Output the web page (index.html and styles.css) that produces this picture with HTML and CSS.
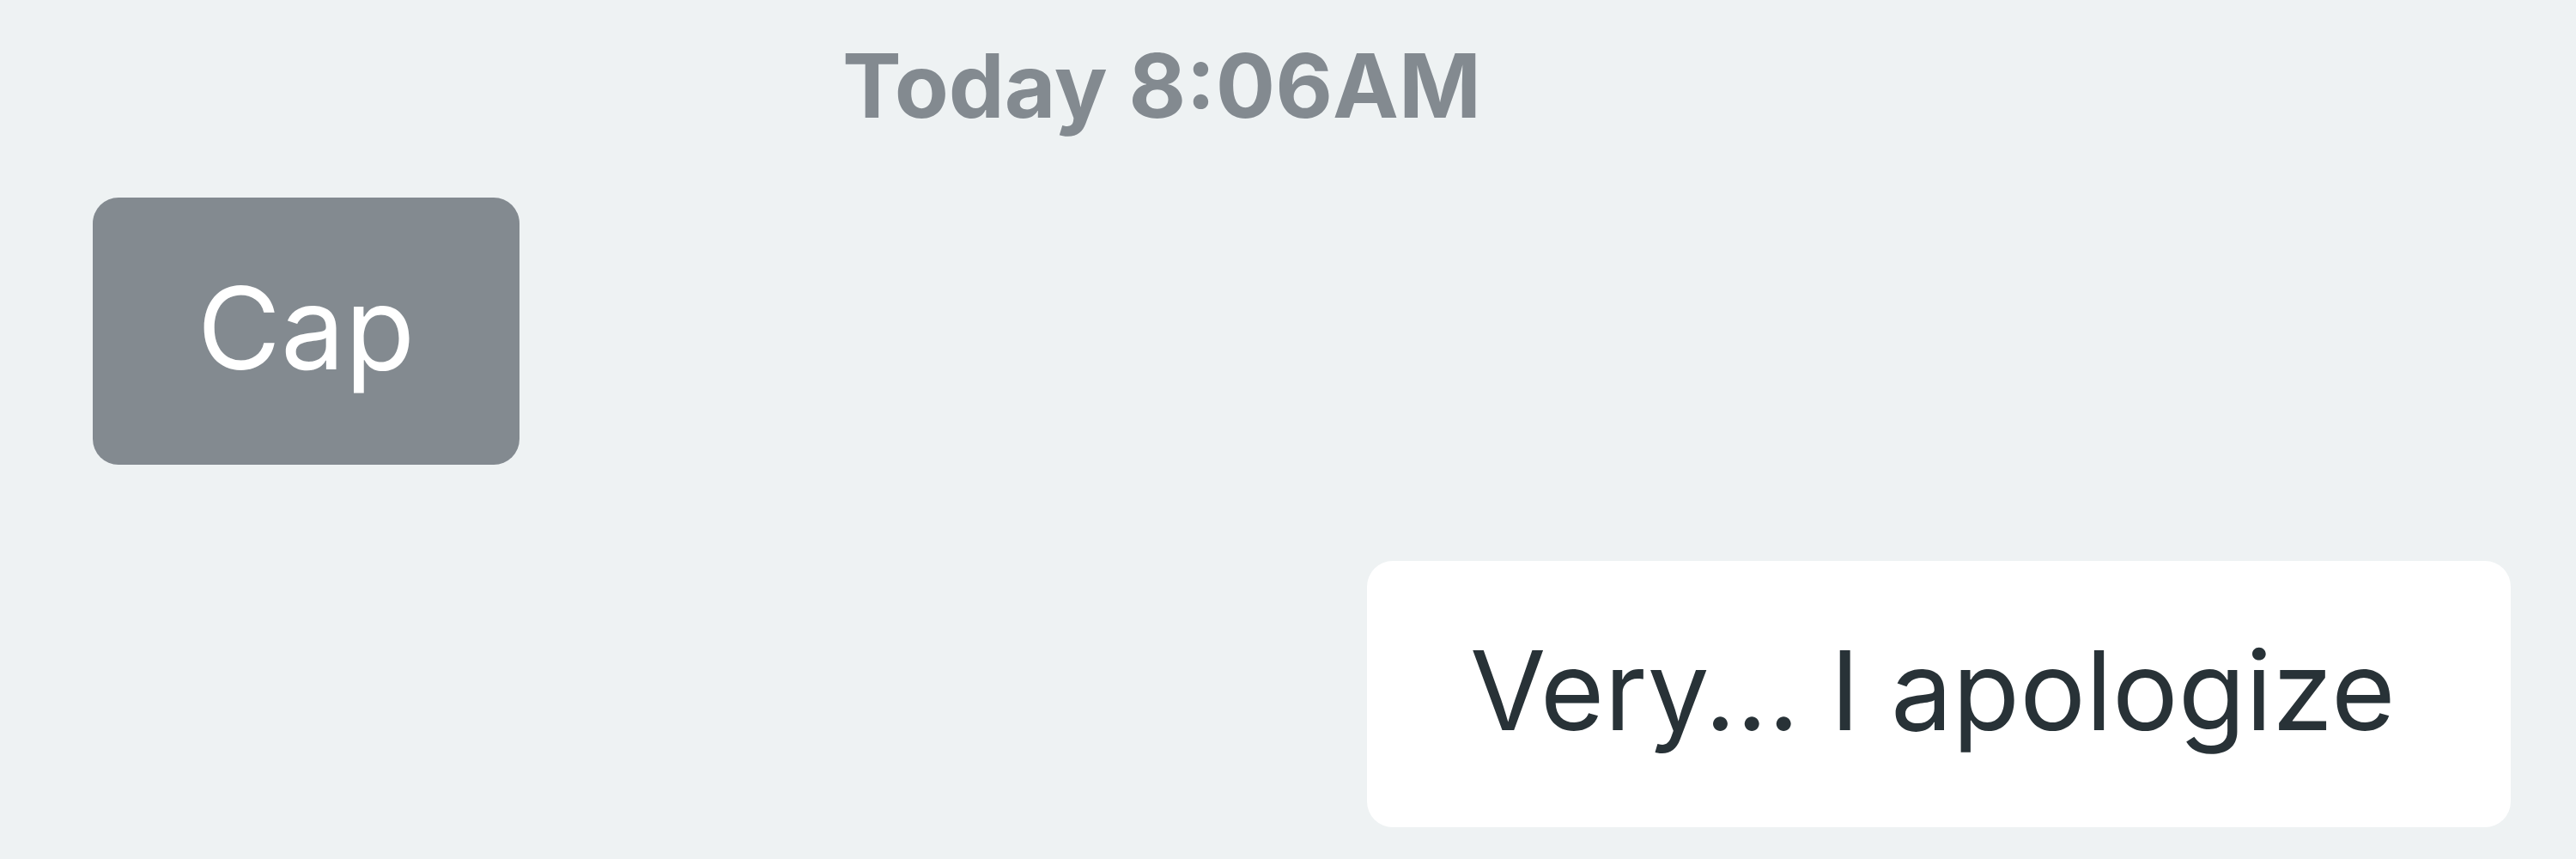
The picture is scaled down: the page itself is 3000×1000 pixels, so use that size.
FILE: index.html
```html
<!DOCTYPE html>
<html lang="en">
<head>
    <meta charset="UTF-8">
    <meta name="viewport" content="width=device-width, initial-scale=1.0">
    <title>Chat</title>
    <link rel="stylesheet" href="styles.css">
</head>
<body>
    <!-- conversation -->
    <main class="chat">
        <div class="stamp">Today 8:06AM</div>
        <div class="msg msg-in">Cap</div>
        <div class="msg msg-out">Very... I apologize</div>
    </main>
</body>
</html>
```

FILE: styles.css
```css
:root {
    --bg: #eef2f3;
    --grey: #838a90;
    --ink: #283237;
}

body {
    margin: 0;
    background: var(--bg);
    font-family: Inter, "Open Sans", sans-serif;
}

.chat {
    display: flex;
    flex-direction: column;
    padding: 38px 76px 0 108px;
}

/* timestamp */
.stamp {
    align-self: flex-start;
    margin-left: 873px;
    font-size: 103px;
    line-height: 1.2;
    font-weight: 700;
    color: var(--grey);
}

/* bubbles */
.msg {
    border-radius: 30px;
    box-sizing: border-box;
    line-height: 1.2;
    white-space: nowrap;
}

.msg-in {
    align-self: flex-start;
    margin-top: 68px;
    width: 497px;
    height: 311px;
    padding: 72px 0 0;
    text-align: center;
    background: var(--grey);
    color: #fff;
    font-size: 133px;
}

.msg-out {
    align-self: flex-end;
    margin-top: 112px;
    width: 1332px;
    height: 310px;
    padding: 74px 0 0 120px;
    background: #fff;
    color: var(--ink);
    font-size: 128px;
}
```
